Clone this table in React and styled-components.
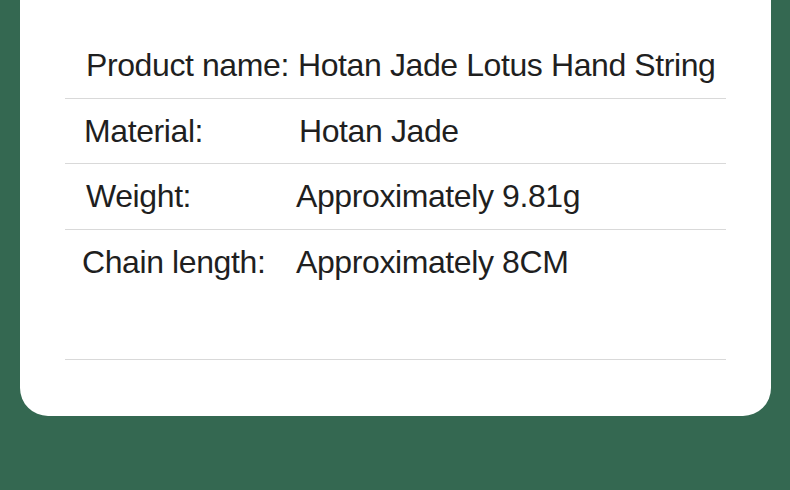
import React from 'react'
import styled, { createGlobalStyle } from 'styled-components'

const GlobalStyle = createGlobalStyle`
    html, body {
        margin: 0;
        padding: 0;
        background: #346851;
    }
    body {
        width: 790px;
        height: 490px;
        overflow: hidden;
        font-family: "Liberation Sans", Arial, sans-serif;
    }
`

const Page = styled.div`
    width: 790px;
    height: 490px;
    padding: 0 19px 0 20px;
    box-sizing: border-box;
`

const Card = styled.div`
    background: #FFF;
    height: 416px;
    border-radius: 0 0 28px 28px;
    padding: 0 45px;
    box-sizing: border-box;
`

const Table = styled.div`
    display: flex;
    flex-direction: column;
`

const Row = styled.div`
    display: flex;
    height: ${props => props.h}px;
    padding-top: ${props => props.top || 0}px;
    border-bottom: 1px solid #d9d9d9;
    box-sizing: border-box;
    align-items: ${props => props.alignTop ? 'flex-start' : 'center'};
`

const Label = styled.div`
    width: ${props => props.w}px;
    padding-left: ${props => props.indent}px;
    flex-shrink: 0;
    box-sizing: border-box;
    font-size: 32px;
    letter-spacing: -0.4px;
    color: #1f1f1f;
    white-space: nowrap;
`

const Value = styled.div`
    font-size: 32px;
    letter-spacing: -0.4px;
    color: #1f1f1f;
    white-space: nowrap;
    padding-left: ${props => props.indent || 0}px;
`

const Cell = styled.div`
    height: 65px;
    display: flex;
    align-items: center;
`

const rows = [
    { label: 'Material:', value: 'Hotan Jade', indent: 19, vIndent: 22, h: 65 },
    { label: 'Weight:', value: 'Approximately 9.81g', indent: 21, vIndent: 19, h: 66 },
]

const App = () => {
    return <Page>
        <GlobalStyle />
        <Card>
            <Table>
                <Row h={99} top={32}>
                    <Label indent={21} w={233}>Product name:</Label>
                    <Value>Hotan Jade Lotus Hand String</Value>
                </Row>
                {rows.map(r => (
                    <Row h={r.h} key={r.label}>
                        <Label indent={r.indent} w={212}>{r.label}</Label>
                        <Value indent={r.vIndent}>{r.value}</Value>
                    </Row>
                ))}
                <Row h={130} alignTop>
                    <Label indent={17} w={212}>
                        <Cell>Chain length:</Cell>
                    </Label>
                    <Value indent={19}><Cell>Approximately 8CM</Cell></Value>
                </Row>
            </Table>
        </Card>
    </Page>
}

export default App
